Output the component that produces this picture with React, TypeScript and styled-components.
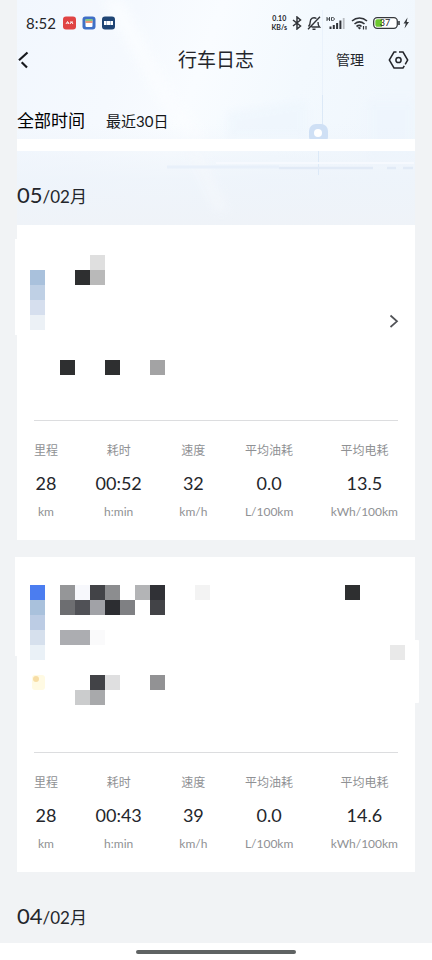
import React from "react";
import styled, { createGlobalStyle } from "styled-components";

const GlobalStyle = createGlobalStyle`
  * { box-sizing: border-box; }
  body {
    margin: 0;
    background: #f1f3f5;
    font-family: Lato, "Noto Sans CJK SC", sans-serif;
    color: #24262b;
  }
  button {
    font-family: inherit;
    color: inherit;
    background: none;
    border: 0;
    padding: 0;
    cursor: pointer;
  }
  h1, h2, dl, dd, dt { margin: 0; font-weight: 400; }
  svg { display: block; }
`;

const Page = styled.div`
  min-height: 100vh;
  display: flex;
  flex-direction: column;
`;

const Content = styled.div`
  flex: 1;
  padding: 0 17px;
`;

const Hero = styled.header`
  position: relative;
  isolation: isolate;
  padding-bottom: 3px;
`;

const Backdrop = styled.svg`
  position: absolute;
  inset: 0;
  width: 100%;
  height: 100%;
  z-index: -1;
`;

const StatusBar = styled.div`
  height: 40px;
  padding: 6px 5px 0 9px;
  display: flex;
  align-items: center;
  justify-content: space-between;
`;

const StatusGroup = styled.div<{ $gap: number }>`
  display: flex;
  align-items: center;
  gap: ${(p) => p.$gap}px;
`;

const Clock = styled.span`
  font-size: 15px;
  line-height: 20px;
`;

const NetSpeed = styled.span`
  display: flex;
  flex-direction: column;
  font-size: 7px;
  line-height: 9px;
  font-weight: 700;
  text-align: center;
`;

const NavBar = styled.div`
  height: 40px;
  display: grid;
  grid-template-columns: 1fr auto 1fr;
  align-items: center;
`;

const Title = styled.h1`
  font-size: 19px;
  line-height: 28px;
`;

const BackButton = styled.button`
  justify-self: start;
`;

const NavActions = styled.div`
  justify-self: end;
  display: flex;
  align-items: center;
  gap: 24px;
  padding-right: 6px;
`;

const TextButton = styled.button`
  font-size: 14px;
  line-height: 20px;
`;

const Filters = styled.div`
  height: 59px;
  padding-top: 22px;
  display: flex;
  align-items: center;
  gap: 21px;
`;

const FilterButton = styled.button<{ $active?: boolean }>`
  font-size: ${(p) => (p.$active ? 17 : 15)}px;
  line-height: 24px;
  color: ${(p) => (p.$active ? "#000" : "#15171a")};
`;

const Band = styled.div`
  height: 12px;
  background: #fff;
`;

const MonthHeading = styled.h2`
  display: flex;
  align-items: baseline;
  height: 71px;
  padding-top: 28px;
  font-size: 17px;
  line-height: 32px;
`;

const Day = styled.span`
  font-size: 22px;
`;

const Trips = styled.div`
  display: flex;
  flex-direction: column;
  gap: 17px;
`;

const Card = styled.article`
  background: #fff;
  padding: 0 17px 20px;
`;

const Route = styled.div`
  position: relative;
  height: 196px;
  border-bottom: 1px solid #dcdddf;
`;

const Mosaic = styled.svg`
  position: absolute;
  top: 0;
  left: -17px;
  overflow: visible;
`;

const EdgeMosaic = styled(Mosaic)`
  left: auto;
  right: -17px;
`;

const OpenButton = styled.button`
  position: absolute;
  right: -2px;
  top: 88px;
`;

const Stats = styled.dl`
  display: flex;
  justify-content: space-between;
  padding-top: 20px;
`;

const Stat = styled.div`
  display: flex;
  flex-direction: column;
  align-items: center;
`;

const StatLabel = styled.dt`
  font-size: 12px;
  line-height: 20px;
  color: #8f9194;
`;

const StatValue = styled.dd`
  padding: 9px 0 7px;
  font-size: 18px;
  line-height: 26px;
`;

const StatUnit = styled.dd`
  font-size: 12px;
  line-height: 17px;
  color: #8f9194;
`;

const HomeBar = styled.footer`
  height: 17px;
  background: #fff;
  display: flex;
  justify-content: center;
  align-items: center;
`;

const HomeHandle = styled.div`
  width: 37%;
  height: 4px;
  border-radius: 2px;
  background: #5f6363;
`;

type Cell = [x: number, y: number, fill: string, width?: number];

interface Trip {
  id: string;
  cells: Cell[];
  edgeCells: Cell[];
  marker?: boolean;
  chevron?: boolean;
  top: number;
  bleed: [number, number];
  values: string[];
}

const trips: Trip[] = [
  {
    id: "a",
    top: 30,
    bleed: [14, 96],
    cells: [
      [13, 15, "#a9c1dc"],
      [13, 30, "#bfd0e5"],
      [13, 45, "#d6dfee"],
      [13, 60, "#ecf1f6"],
      [73, 0, "#dfdfdf"],
      [58, 15, "#2e2f30"],
      [73, 15, "#b9b9b9"],
      [43, 105, "#2e2f30"],
      [88, 105, "#2e2f30"],
      [133, 105, "#a3a3a4"],
    ],
    edgeCells: [],
    chevron: true,
    values: ["28", "00:52", "32", "0.0", "13.5"],
  },
  {
    id: "b",
    top: 28,
    bleed: [0, 99],
    cells: [
      [13, 0, "#4b7df0"],
      [13, 15, "#a9c1dc"],
      [13, 30, "#bccce4"],
      [13, 45, "#d6e0ed"],
      [13, 60, "#eaf1f7"],
      [43, 0, "#959698"],
      [58, 0, "#f7f8fc"],
      [73, 0, "#424347"],
      [88, 0, "#8c8d8f"],
      [118, 0, "#b3b4b6"],
      [133, 0, "#303136"],
      [178, 0, "#f3f3f3"],
      [43, 15, "#6d6e71"],
      [58, 15, "#505156"],
      [73, 15, "#a1a2a7"],
      [88, 15, "#2c2d31"],
      [103, 15, "#7f8083"],
      [133, 15, "#424347"],
      [43, 45, "#acadb1", 30],
      [73, 45, "#fafafb"],
      [73, 90, "#424347"],
      [88, 90, "#dfdfe0"],
      [133, 90, "#929294"],
      [58, 105, "#cbcccd"],
      [73, 105, "#a8a9ab"],
    ],
    edgeCells: [
      [30, 0, "#2e2f30"],
      [75, 60, "#e9e9e9"],
    ],
    marker: true,
    values: ["28", "00:43", "39", "0.0", "14.6"],
  },
];

const metrics = [
  { label: "里程", unit: "km" },
  { label: "耗时", unit: "h:min" },
  { label: "速度", unit: "km/h" },
  { label: "平均油耗", unit: "L/100km" },
  { label: "平均电耗", unit: "kWh/100km" },
];

const Cells = ({ cells, top }: { cells: Cell[]; top: number }) => (
  <g shapeRendering="crispEdges">
    {cells.map(([x, y, fill, width = 15]) => (
      <rect key={`${x}-${y}`} x={x} y={y + top} width={width} height="15" fill={fill} />
    ))}
  </g>
);

const HeroBackdrop = () => (
  <Backdrop viewBox="0 0 398 225" preserveAspectRatio="none" aria-hidden="true">
    <defs>
      <linearGradient id="sky" x1="0" x2="1" y1="0" y2="0.2">
        <stop offset="0" stopColor="#f2f7fe" />
        <stop offset="0.3" stopColor="#f5f9fe" />
        <stop offset="0.5" stopColor="#f9fcff" />
        <stop offset="0.75" stopColor="#f3f9fe" />
        <stop offset="1" stopColor="#f1f7fd" />
      </linearGradient>
      <linearGradient id="ground" x1="0" x2="0" y1="0" y2="1">
        <stop offset="0.55" stopColor="#edf3fa" stopOpacity="0" />
        <stop offset="0.8" stopColor="#edf3fa" stopOpacity="0.8" />
        <stop offset="1" stopColor="#eff3f8" />
      </linearGradient>
      <filter id="soft" x="-20%" y="-20%" width="140%" height="140%">
        <feGaussianBlur stdDeviation="4" />
      </filter>
    </defs>
    <rect width="398" height="225" fill="url(#sky)" />
    <path d="M86 0h20l54 100 30 40h-22l-32-50z" fill="#fbfdff" opacity="0.8" filter="url(#soft)" />
    <path d="M210 112l80-12v39h-80zM350 100h48v60h-48z" fill="#edf5fd" opacity="0.6" filter="url(#soft)" />
    <rect width="398" height="225" fill="url(#ground)" />
    <path d="M168 151h16l28 60h-14z" fill="#f5f8fc" opacity="0.6" filter="url(#soft)" />
    <path d="M305.500 95v35M301.500 151v24" stroke="#dce9f7" strokeWidth="1" />
    <path d="M305.500 10v85" stroke="#eaf2fb" strokeWidth="1" />
    <path d="M199 163h198" stroke="#f6f9fe" strokeWidth="2" />
    <path d="M150 167h112" stroke="#e8f0fa" strokeWidth="3" />
    <path d="M262 168h94M370 168h9M386 168h10" stroke="#e1eaf6" strokeWidth="2.500" />
    <rect x="292" y="124" width="19" height="20" rx="7" fill="#cfe0f5" />
    <circle cx="301" cy="133" r="4" fill="#fff" />
  </Backdrop>
);

const AppBadges = () => (
  <svg width="52" height="14" viewBox="0 0 52 14" aria-hidden="true">
    <rect x="0" y="0.500" width="13" height="13" rx="3" fill="#e04444" />
    <path d="M3 8l1.500-2.500L6 8M4 7h2M7 6h3M7 8l1.500-2L10 8" stroke="#fff" strokeWidth="0.900" fill="none" />
    <rect x="19.500" y="0.500" width="13" height="13" rx="3" fill="#3f6fc6" />
    <rect x="22.500" y="3" width="7" height="8" rx="1" fill="#fff" />
    <path d="M22.500 4h7" stroke="#5eb35b" strokeWidth="1.500" />
    <path d="M22.500 6h7" stroke="#e8744a" strokeWidth="1.500" />
    <rect x="39" y="0.500" width="13" height="13" rx="3" fill="#1f4575" />
    <rect x="41" y="5" width="9" height="4" fill="#fff" />
    <path d="M43.500 5v4M47.500 5v4" stroke="#8ba5c4" strokeWidth="0.700" />
  </svg>
);

const BluetoothIcon = () => (
  <svg width="10" height="14" viewBox="0 0 10 14" fill="none" stroke="#303338" strokeWidth="1.500" role="img" aria-label="Bluetooth">
    <path d="M1 4l7.500 6L5 13V1l3.500 3L1 10" />
  </svg>
);

const MutedBellIcon = () => (
  <svg width="14" height="14" viewBox="0 0 14 14" fill="none" stroke="#303338" strokeWidth="1.400" role="img" aria-label="Muted">
    <path d="M4.500 11h8c-1.500-1.500-1.500-3-1.500-5M9.500 2.500C6.500 0.500 3.200 2.500 3.200 6c0 2-.2 3-1.700 4.500M5.500 13.200h3M13 0.700L1 13.300" />
  </svg>
);

const SignalIcon = () => (
  <svg width="20" height="14" viewBox="0 0 20 14" fill="none" stroke="#303338" role="img" aria-label="HD signal">
    <path d="M1 1v4M1 3h2.500M3.500 1v4M5.500 1.500v3h1c2.500 0 2.500-3 0-3z" strokeWidth="0.900" />
    <path d="M4.500 10.500V13M7.800 9v4M11.100 7v6M14.400 4.500V13" strokeWidth="2" />
    <path d="M17.700 2V13" stroke="#b9bdc2" strokeWidth="1.800" />
  </svg>
);

const WifiIcon = () => (
  <svg width="17" height="14" viewBox="0 0 17 14" fill="none" stroke="#303338" strokeWidth="1.600" role="img" aria-label="Wi-Fi">
    <path d="M1 5c4.500-4 10.500-4 15 0M3.500 8c3-2.600 7-2.600 10 0M5.500 10.500c2-1.500 3.500-1.500 5 0" />
    <path d="M6.500 11.500l2 2 1.500-1.500-1.500-1z" fill="#303338" stroke="none" />
    <path d="M12.500 10v3.500M15 10v3.500" strokeWidth="1.200" />
  </svg>
);

const BatteryIcon = () => (
  <svg width="37" height="12" viewBox="0 0 37 12" role="img" aria-label="Battery 37">
    <rect x="0.700" y="0.700" width="23.600" height="10.600" rx="3.500" fill="#fff" stroke="#34383c" strokeWidth="1.300" />
    <path d="M4.500 2.200H9v7.600H4.500C3 9.800 2.300 9 2.300 7.500v-3c0-1.500.7-2.300 2.200-2.300z" fill="#6cc72f" />
    <text x="12" y="9" textAnchor="middle" fontSize="9" fontFamily="Lato, sans-serif" fill="#24262b">37</text>
    <path d="M26 4v4" stroke="#34383c" strokeWidth="1.600" />
    <path d="M34.500 0.500L30.500 6.500h2.300L31.500 11.500l4.500-6.500h-2.300z" fill="#34383c" />
  </svg>
);

const TripCard = ({ trip }: { trip: Trip }) => (
  <Card>
    <Route>
      <Mosaic width="200" height="190" viewBox="0 0 200 190" aria-hidden="true">
        <rect x="-2" y={trip.bleed[0]} width="3" height={trip.bleed[1]} fill="#fff" />
        <Cells cells={trip.cells} top={trip.top} />
        {trip.marker && (
          <g>
            <rect x="15" y="118" width="13" height="15" rx="3" fill="#fffae3" />
            <circle cx="19" cy="122" r="3" fill="#f7dda5" />
          </g>
        )}
      </Mosaic>
      {trip.edgeCells.length > 0 && (
        <EdgeMosaic width="100" height="160" viewBox="0 0 100 160" aria-hidden="true">
          <rect x="99" y="83" width="5" height="63" rx="1" fill="#fff" />
          <Cells cells={trip.edgeCells} top={trip.top} />
        </EdgeMosaic>
      )}
      {trip.chevron && (
        <OpenButton type="button" aria-label="详情">
          <svg width="12" height="16" viewBox="0 0 12 16" fill="none" stroke="#505256" strokeWidth="1.700">
            <path d="M2.500 2.500L9 8.300 2.500 14" />
          </svg>
        </OpenButton>
      )}
    </Route>
    <Stats>
      {metrics.map((m, i) => (
        <Stat key={m.label}>
          <StatLabel>{m.label}</StatLabel>
          <StatValue>{trip.values[i]}</StatValue>
          <StatUnit>{m.unit}</StatUnit>
        </Stat>
      ))}
    </Stats>
  </Card>
);

const Month = ({ day, month }: { day: string; month: string }) => (
  <MonthHeading>
    <Day>{day}</Day>
    <span>/{month}月</span>
  </MonthHeading>
);

export default function App() {
  return (
    <>
      <GlobalStyle />
      <Page>
        <Content>
          <Hero>
            <HeroBackdrop />
            <StatusBar>
              <StatusGroup $gap={7}>
                <Clock>8:52</Clock>
                <AppBadges />
              </StatusGroup>
              <StatusGroup $gap={5}>
                <NetSpeed>
                  <span>0.10</span>
                  <span>KB/s</span>
                </NetSpeed>
                <BluetoothIcon />
                <MutedBellIcon />
                <SignalIcon />
                <WifiIcon />
                <BatteryIcon />
              </StatusGroup>
            </StatusBar>
            <NavBar>
              <BackButton type="button" aria-label="返回">
                <svg width="12" height="18" viewBox="0 0 12 18" fill="none" stroke="#17191d" strokeWidth="2.200">
                  <path d="M10.500 1.500L2 9.300M4.700 11.300L10 16.500" />
                </svg>
              </BackButton>
              <Title>行车日志</Title>
              <NavActions>
                <TextButton type="button">管理</TextButton>
                <button type="button" aria-label="设置">
                  <svg width="21" height="18" viewBox="0 0 21 18" fill="none" stroke="#24262b" strokeWidth="1.500">
                    <path d="M8.500 1H6L1.300 9 6 17h9l1.300-2.200M11 1h4l4.700 8-2.500 4.300" />
                    <circle cx="10.500" cy="9" r="2.600" />
                  </svg>
                </button>
              </NavActions>
            </NavBar>
            <Filters>
              <FilterButton type="button" $active>
                全部时间
              </FilterButton>
              <FilterButton type="button">最近30日</FilterButton>
            </Filters>
            <Band />
            <Month day="05" month="02" />
          </Hero>
          <Trips>
            {trips.map((t) => (
              <TripCard key={t.id} trip={t} />
            ))}
          </Trips>
          <Month day="04" month="02" />
        </Content>
        <HomeBar>
          <HomeHandle />
        </HomeBar>
      </Page>
    </>
  );
}
